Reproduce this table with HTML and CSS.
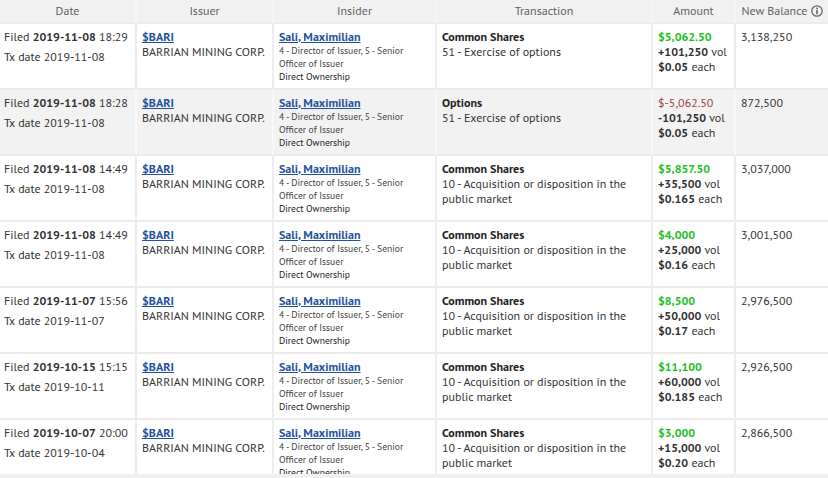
FILE: index.html
```html
<!DOCTYPE html>
<html lang="en">
<head>
<meta charset="utf-8">
<title>Insider transactions</title>
<link rel="stylesheet" href="styles.css">
</head>
<body>
<div class="wrap">
<table class="trades">
  <colgroup>
    <col class="w-date"><col class="w-issuer"><col class="w-insider"><col class="w-tx"><col class="w-amount"><col class="w-bal">
  </colgroup>
  <thead>
    <tr>
      <th>Date</th><th>Issuer</th><th>Insider</th><th>Transaction</th><th>Amount</th>
      <th>New Balance <svg class="info" width="12" height="12" viewBox="0 0 12 12"><circle cx="6" cy="6" r="5.2" fill="none" stroke="#666" stroke-width="1.3"/><circle cx="6" cy="3.4" r="0.95" fill="#666"/><rect x="5.2" y="5" width="1.6" height="4.2" fill="#666"/></svg></th>
    </tr>
  </thead>
  <tbody>
    <tr>
      <td><div class="filed">Filed <b>2019-11-08</b> 18:29</div><div class="txd">Tx date 2019-11-08</div></td>
      <td><a class="lnk" href="#">$BARI</a><div>BARRIAN MINING CORP.</div></td>
      <td><a class="lnk" href="#">Sali, Maximilian</a><div class="small">4 - Director of Issuer, 5 - Senior Officer of Issuer</div><div class="small own">Direct Ownership</div></td>
      <td><div class="sec">Common Shares</div><div>51 - Exercise of options</div></td>
      <td><div class="amt pos">$5,062.50</div><div><b>+101,250</b> vol</div><div><b>$0.05</b> each</div></td>
      <td>3,138,250</td>
    </tr>
    <tr class="hl">
      <td><div class="filed">Filed <b>2019-11-08</b> 18:28</div><div class="txd">Tx date 2019-11-08</div></td>
      <td><a class="lnk" href="#">$BARI</a><div>BARRIAN MINING CORP.</div></td>
      <td><a class="lnk" href="#">Sali, Maximilian</a><div class="small">4 - Director of Issuer, 5 - Senior Officer of Issuer</div><div class="small own">Direct Ownership</div></td>
      <td><div class="sec">Options</div><div>51 - Exercise of options</div></td>
      <td><div class="amt neg">$-5,062.50</div><div><b>-101,250</b> vol</div><div><b>$0.05</b> each</div></td>
      <td>872,500</td>
    </tr>
    <tr>
      <td><div class="filed">Filed <b>2019-11-08</b> 14:49</div><div class="txd">Tx date 2019-11-08</div></td>
      <td><a class="lnk" href="#">$BARI</a><div>BARRIAN MINING CORP.</div></td>
      <td><a class="lnk" href="#">Sali, Maximilian</a><div class="small">4 - Director of Issuer, 5 - Senior Officer of Issuer</div><div class="small own">Direct Ownership</div></td>
      <td><div class="sec">Common Shares</div><div>10 - Acquisition or disposition in the public market</div></td>
      <td><div class="amt pos">$5,857.50</div><div><b>+35,500</b> vol</div><div><b>$0.165</b> each</div></td>
      <td>3,037,000</td>
    </tr>
    <tr>
      <td><div class="filed">Filed <b>2019-11-08</b> 14:49</div><div class="txd">Tx date 2019-11-08</div></td>
      <td><a class="lnk" href="#">$BARI</a><div>BARRIAN MINING CORP.</div></td>
      <td><a class="lnk" href="#">Sali, Maximilian</a><div class="small">4 - Director of Issuer, 5 - Senior Officer of Issuer</div><div class="small own">Direct Ownership</div></td>
      <td><div class="sec">Common Shares</div><div>10 - Acquisition or disposition in the public market</div></td>
      <td><div class="amt pos">$4,000</div><div><b>+25,000</b> vol</div><div><b>$0.16</b> each</div></td>
      <td>3,001,500</td>
    </tr>
    <tr>
      <td><div class="filed">Filed <b>2019-11-07</b> 15:56</div><div class="txd">Tx date 2019-11-07</div></td>
      <td><a class="lnk" href="#">$BARI</a><div>BARRIAN MINING CORP.</div></td>
      <td><a class="lnk" href="#">Sali, Maximilian</a><div class="small">4 - Director of Issuer, 5 - Senior Officer of Issuer</div><div class="small own">Direct Ownership</div></td>
      <td><div class="sec">Common Shares</div><div>10 - Acquisition or disposition in the public market</div></td>
      <td><div class="amt pos">$8,500</div><div><b>+50,000</b> vol</div><div><b>$0.17</b> each</div></td>
      <td>2,976,500</td>
    </tr>
    <tr>
      <td><div class="filed">Filed <b>2019-10-15</b> 15:15</div><div class="txd">Tx date 2019-10-11</div></td>
      <td><a class="lnk" href="#">$BARI</a><div>BARRIAN MINING CORP.</div></td>
      <td><a class="lnk" href="#">Sali, Maximilian</a><div class="small">4 - Director of Issuer, 5 - Senior Officer of Issuer</div><div class="small own">Direct Ownership</div></td>
      <td><div class="sec">Common Shares</div><div>10 - Acquisition or disposition in the public market</div></td>
      <td><div class="amt pos">$11,100</div><div><b>+60,000</b> vol</div><div><b>$0.185</b> each</div></td>
      <td>2,926,500</td>
    </tr>
    <tr>
      <td><div class="filed">Filed <b>2019-10-07</b> 20:00</div><div class="txd">Tx date 2019-10-04</div></td>
      <td><a class="lnk" href="#">$BARI</a><div>BARRIAN MINING CORP.</div></td>
      <td><a class="lnk" href="#">Sali, Maximilian</a><div class="small">4 - Director of Issuer, 5 - Senior Officer of Issuer</div><div class="small own">Direct Ownership</div></td>
      <td><div class="sec">Common Shares</div><div>10 - Acquisition or disposition in the public market</div></td>
      <td><div class="amt pos">$3,000</div><div><b>+15,000</b> vol</div><div><b>$0.20</b> each</div></td>
      <td>2,866,500</td>
    </tr>
  </tbody>
</table>
</div>
</body>
</html>
```

FILE: styles.css
```css
html, body {
  margin: 0;
  padding: 0;
  background: #f0f0f0;
}
body {
  font-family: "PT Sans", Lato, sans-serif;
  font-size: 12px;
  color: #333;
}
.wrap {
  height: 474px;
  overflow: hidden;
  background: #fff;
}
.trades {
  width: 828px;
  table-layout: fixed;
  border-collapse: separate;
  border-spacing: 0;
}
.w-date { width: 137px; }
.w-issuer { width: 137px; }
.w-insider { width: 163px; }
.w-tx { width: 216px; }
.w-amount { width: 83px; }
.w-bal { width: 92px; }
.trades th,
.trades td {
  border-right: 2px solid #ededed;
  border-bottom: 2px solid #ebebeb;
  text-align: left;
  vertical-align: top;
}
.trades th:last-child,
.trades td:last-child {
  border-right: 0;
}
.trades th {
  height: 22px;
  padding: 0 4px;
  box-sizing: border-box;
  background: #f1f1f1;
  color: #626262;
  font-weight: normal;
  text-align: center;
  vertical-align: middle;
  line-height: 22px;
  border-right-color: #f6f6f6;
}
.trades td {
  height: 64px;
  box-sizing: border-box;
  padding: 5px 4px 5px 5px;
  line-height: 15px;
  background: #fff;
}
.trades td:first-child {
  padding-left: 4px;
}
.trades tr.hl td {
  background: #f2f2f2;
  border-right-color: #f8f8f8;
}
.info {
  vertical-align: -2px;
}
.txd {
  margin-top: 5px;
}
.lnk {
  color: #24519e;
  font-weight: bold;
  text-decoration: underline;
}
.small {
  font-size: 9.6px;
  line-height: 13px;
  color: #444;
}
.own {
  color: #222;
}
.sec {
  font-weight: bold;
  color: #222;
}
.amt {
  font-weight: bold;
}
.pos { color: #22bf22; }
.neg { color: #a23c3c; font-weight: normal; }
```
